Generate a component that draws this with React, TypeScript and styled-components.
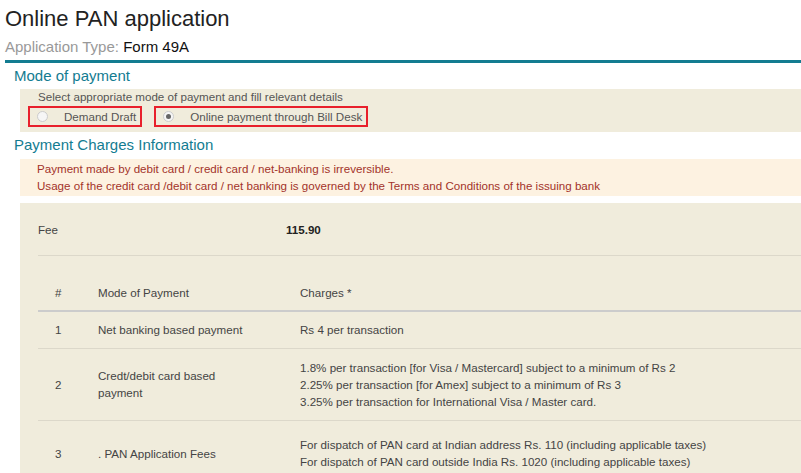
import React from 'react';
import styled, {createGlobalStyle} from 'styled-components'

const Global = createGlobalStyle`
    body {
        margin: 0;
        background: #fff;
        font-family: "Liberation Sans", Arial, sans-serif;
        overflow: hidden;
    }
`

const Page = styled.div`
    width: 801px;
    height: 473px;
    overflow: hidden;
`

const Title = styled.h1`
    margin: 0;
    padding: 6px 0 0 5px;
    font-size: 22px;
    font-weight: normal;
    color: #222;
    line-height: 26px;
`

const AppType = styled.div`
    margin-left: 5px;
    padding-top: 6px;
    height: 22px;
    font-size: 15px;
    line-height: 18px;
    color: #999;
    border-bottom: 3px solid #137c91;
    span { color: #111; }
`

const SectionTitle = styled.div<{$top: number}>`
    margin: ${p => p.$top}px 0 0 14px;
    font-size: 15px;
    line-height: 18px;
    color: #137c91;
`

const Band = styled.div`
    margin: 4px 0 0 20px;
    height: 43px;
    background: #f0ecdc;
    padding: 1px 0 0 18px;
    box-sizing: border-box;
    font-size: 11.6px;
    color: #555;
`

const RadioRow = styled.div`
    display: flex;
    gap: 12px;
    margin: 3px 0 0 -10px;
`

const Option = styled.label`
    display: flex;
    align-items: center;
    height: 21px;
    box-sizing: border-box;
    border: 2px solid #e8202c;
    padding: 0 4px 0 7px;
    font-size: 11.6px;
    color: #555;
    gap: 16px;
`

const Radio = styled.span<{$on?: boolean}>`
    width: 9px;
    height: 9px;
    border-radius: 50%;
    border: 1px solid #ccc;
    background: #f6f6f6;
    position: relative;
    &::after {
        content: '';
        display: ${p => p.$on ? 'block' : 'none'};
        position: absolute;
        left: 2px;
        top: 2px;
        width: 5px;
        height: 5px;
        border-radius: 50%;
        background: #666;
    }
`

const Notice = styled.div`
    margin: 5px 0 0 20px;
    height: 37px;
    background: #fdf2e1;
    padding: 1px 0 0 17px;
    box-sizing: border-box;
    font-size: 11.6px;
    line-height: 17px;
    color: #a3332a;
`

const Panel = styled.div`
    margin: 7px 0 0 20px;
    height: 280px;
    background: #f0ecdc;
    padding: 0 0 0 18px;
`

const FeeRow = styled.div`
    display: flex;
    height: 52px;
    align-items: center;
    border-bottom: 1px solid #dcd8ca;
    font-size: 11.6px;
    color: #444;
    b { margin-left: 228px; color: #222; }
`

const Table = styled.table`
    margin-top: 18px;
    width: 100%;
    border-collapse: collapse;
    font-size: 11.6px;
    color: #444;
    td, th {
        text-align: left;
        font-weight: normal;
        vertical-align: middle;
        line-height: 17px;
        padding: 0;
    }
`

const Head = styled.tr`
    height: 37px;
    border-bottom: 2px solid #ccc;
`

const Row = styled.tr<{$h: number}>`
    height: ${p => p.$h}px;
    border-bottom: 1px solid #dcd8ca;
`

const Num = styled.td`
    width: 60px;
    padding-left: 17px !important;
    box-sizing: border-box;
`

const Mode = styled.td`
    width: 202px;
`

const App = () => (
    <Page>
        <Global />
        <Title>Online PAN application</Title>
        <AppType>Application Type: <span>Form 49A</span></AppType>
        <SectionTitle $top={4}>Mode of payment</SectionTitle>
        <Band>
            Select appropriate mode of payment and fill relevant details
            <RadioRow>
                <Option><Radio />Demand Draft</Option>
                <Option><Radio $on />Online payment through Bill Desk</Option>
            </RadioRow>
        </Band>
        <SectionTitle $top={4}>Payment Charges Information</SectionTitle>
        <Notice>
            Payment made by debit card / credit card / net-banking is irreversible.<br />
            Usage of the credit card /debit card / net banking is governed by the Terms and Conditions of the issuing bank
        </Notice>
        <Panel>
            <FeeRow>Fee<b>115.90</b></FeeRow>
            <Table>
                <tbody>
                    <Head><Num as="th">#</Num><Mode as="th">Mode of Payment</Mode><th>Charges *</th></Head>
                    <Row $h={37}><Num>1</Num><Mode>Net banking based payment</Mode><td>Rs 4 per transaction</td></Row>
                    <Row $h={72}>
                        <Num>2</Num>
                        <Mode>Credt/debit card based<br />payment</Mode>
                        <td>
                            1.8% per transaction [for Visa / Mastercard] subject to a minimum of Rs 2<br />
                            2.25% per transaction [for Amex] subject to a minimum of Rs 3<br />
                            3.25% per transaction for International Visa / Master card.
                        </td>
                    </Row>
                    <Row $h={66}>
                        <Num>3</Num>
                        <Mode>. PAN Application Fees</Mode>
                        <td>
                            For dispatch of PAN card at Indian address Rs. 110 (including applicable taxes)<br />
                            For dispatch of PAN card outside India Rs. 1020 (including applicable taxes)
                        </td>
                    </Row>
                </tbody>
            </Table>
        </Panel>
    </Page>
)

export default App
